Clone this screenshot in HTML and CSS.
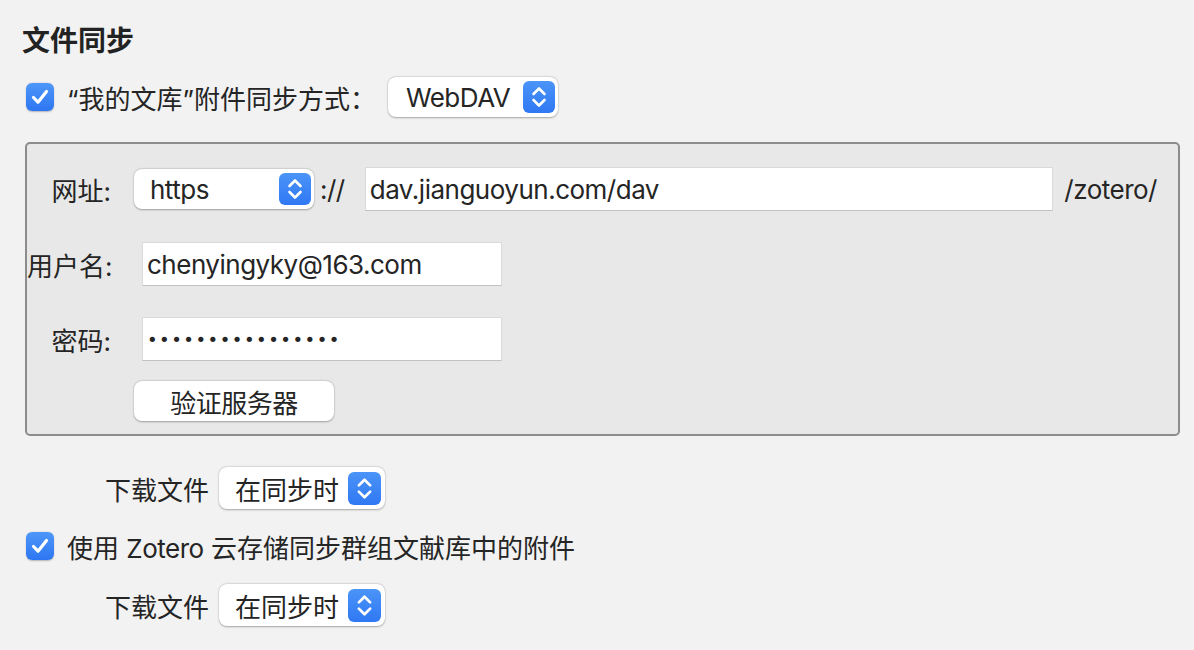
FILE: index.html
```html
<!DOCTYPE html>
<html lang="zh-CN">
<head>
<meta charset="utf-8">
<title>文件同步</title>
<link rel="stylesheet" href="styles.css">
</head>
<body>
<div class="pane">
  <h2 class="title">文件同步</h2>

  <div class="check-row first-check">
    <span class="checkbox"><svg viewBox="0 0 28 28" width="28" height="28"><path d="M7.5 14.5 L12 19.2 L20.5 8.5" fill="none" stroke="#fff" stroke-width="3.2" stroke-linecap="round" stroke-linejoin="round"/></svg></span>
    <span class="check-label">“我的文库”附件同步方式：</span>
    <div class="select select-webdav">
      <span class="select-text lat">WebDAV</span>
      <span class="stepper"><svg viewBox="0 0 32 32" width="32" height="32"><path d="M10.5 13 L16 7.5 L21.5 13 M10.5 19 L16 24.5 L21.5 19" fill="none" stroke="#fff" stroke-width="2.6" stroke-linecap="round" stroke-linejoin="round"/></svg></span>
    </div>
  </div>

  <div class="group">
    <div class="grow grow-url">
      <span class="glabel">网址:</span>
      <div class="select select-scheme">
        <span class="select-text lat">https</span>
        <span class="stepper"><svg viewBox="0 0 32 32" width="32" height="32"><path d="M10.5 13 L16 7.5 L21.5 13 M10.5 19 L16 24.5 L21.5 19" fill="none" stroke="#fff" stroke-width="2.6" stroke-linecap="round" stroke-linejoin="round"/></svg></span>
      </div>
      <span class="sep lat">://</span>
      <div class="field field-url lat">dav.jianguoyun.com/dav</div>
      <span class="suffix lat">/zotero/</span>
    </div>
    <div class="grow grow-user">
      <span class="glabel">用户名:</span>
      <div class="field field-short lat">chenyingyky@163.com</div>
    </div>
    <div class="grow grow-pass">
      <span class="glabel">密码:</span>
      <div class="field field-short field-pass">••••••••••••••••</div>
    </div>
    <div class="grow grow-btn">
      <button class="button" type="button">验证服务器</button>
    </div>
  </div>

  <div class="dl-row dl-first">
    <span class="dl-label">下载文件</span>
    <div class="select select-dl">
      <span class="select-text">在同步时</span>
      <span class="stepper"><svg viewBox="0 0 32 32" width="33" height="33"><path d="M10.5 13 L16 7.5 L21.5 13 M10.5 19 L16 24.5 L21.5 19" fill="none" stroke="#fff" stroke-width="2.6" stroke-linecap="round" stroke-linejoin="round"/></svg></span>
    </div>
  </div>

  <div class="check-row second-check">
    <span class="checkbox"><svg viewBox="0 0 28 28" width="28" height="28"><path d="M7.5 14.5 L12 19.2 L20.5 8.5" fill="none" stroke="#fff" stroke-width="3.2" stroke-linecap="round" stroke-linejoin="round"/></svg></span>
    <span class="check-label">使用 <span class="lat">Zotero</span> 云存储同步群组文献库中的附件</span>
  </div>

  <div class="dl-row dl-second">
    <span class="dl-label">下载文件</span>
    <div class="select select-dl">
      <span class="select-text">在同步时</span>
      <span class="stepper"><svg viewBox="0 0 32 32" width="33" height="33"><path d="M10.5 13 L16 7.5 L21.5 13 M10.5 19 L16 24.5 L21.5 19" fill="none" stroke="#fff" stroke-width="2.6" stroke-linecap="round" stroke-linejoin="round"/></svg></span>
    </div>
  </div>
</div>
</body>
</html>
```

FILE: styles.css
```css
html, body {
  margin: 0;
  padding: 0;
  background: #f2f2f2;
}

body {
  width: 1194px;
  height: 650px;
  overflow: hidden;
  font-family: Inter, "Noto Sans CJK SC", sans-serif;
  font-size: 26px;
  color: #252525;
}

.lat {
  letter-spacing: -0.5px;
}

.pane {
  padding: 0 14px 0 25px;
}

.title {
  margin: 20px 0 0 -3px;
  font-size: 28px;
  line-height: 38px;
  font-weight: 700;
  color: #222;
  font-family: "Noto Sans CJK SC", sans-serif;
}

.check-row {
  display: flex;
  align-items: center;
  height: 40px;
}

.first-check {
  margin-top: 19px;
}

.second-check {
  margin-top: 21px;
  height: 32px;
}

.checkbox {
  flex: none;
  width: 28px;
  height: 28px;
  border-radius: 6px;
  margin-left: 1px;
  background: linear-gradient(#4e97f9, #2d76f2);
  box-shadow: 0 0.5px 1.5px rgba(0, 0, 0, 0.25);
  display: flex;
}

.check-label {
  margin-left: 13px;
  white-space: nowrap;
}

.select {
  position: relative;
  display: flex;
  align-items: center;
  background: #fff;
  border-radius: 8px;
  box-shadow: 0 0.5px 2px rgba(0, 0, 0, 0.3), 0 0 0 0.5px rgba(0, 0, 0, 0.06);
  box-sizing: border-box;
}

.select-text {
  white-space: nowrap;
}

.stepper {
  position: absolute;
  right: 3px;
  top: 4px;
  width: 32px;
  height: 32px;
  border-radius: 6px;
  background: linear-gradient(#4b94f8, #2f78f3);
  display: flex;
}

.select-webdav {
  margin-left: 12px;
  width: 170px;
  height: 40px;
  padding-left: 18px;
}

.group {
  margin-top: 25px;
  border: 2px solid #8c8c8c;
  border-radius: 5px;
  background: #e8e8e8;
  height: 294px;
  box-sizing: border-box;
  padding: 23px 21px 0 0;
}

.grow {
  display: flex;
  align-items: center;
  height: 44px;
}

.grow-user {
  margin-top: 31px;
}

.grow-pass {
  margin-top: 31px;
}

.grow-btn {
  margin-top: 20px;
  height: 40px;
  padding-left: 107px;
}

.glabel {
  flex: none;
  width: 84px;
  text-align: right;
  white-space: nowrap;
}

.select-scheme {
  margin-left: 23px;
  width: 180px;
  height: 40px;
  padding-left: 16px;
}

.sep {
  margin-left: 6px;
}

.field {
  height: 44px;
  box-sizing: border-box;
  background: #fff;
  border: 1px solid #dadada;
  border-bottom-color: #c2c2c2;
  display: flex;
  align-items: center;
  padding-left: 4px;
  white-space: nowrap;
}

.field-url {
  margin-left: 20px;
  flex: 1;
}

.suffix {
  margin-left: 11px;
}

.field-short {
  margin-left: 31px;
  width: 360px;
}

.field-pass {
  padding-left: 4px;
  font-family: "DejaVu Sans", sans-serif;
  font-size: 18px;
  letter-spacing: 1.5px;
}

.button {
  width: 200px;
  height: 40px;
  border: none;
  border-radius: 8px;
  background: #fff;
  box-shadow: 0 0.5px 2px rgba(0, 0, 0, 0.3), 0 0 0 0.5px rgba(0, 0, 0, 0.06);
  font-family: "Noto Sans CJK SC", sans-serif;
  font-size: 26px;
  letter-spacing: -0.5px;
  color: #252525;
  padding: 0;
}

.dl-row {
  display: flex;
  align-items: center;
  height: 42px;
  padding-left: 80px;
}

.dl-first {
  margin-top: 31px;
}

.dl-second {
  margin-top: 22px;
}

.dl-label {
  white-space: nowrap;
}

.select-dl {
  margin-left: 10px;
  width: 166px;
  height: 42px;
  padding-left: 16px;
}

.select-dl .stepper {
  width: 33px;
  height: 33px;
  top: 4.5px;
  right: 4px;
}
```
